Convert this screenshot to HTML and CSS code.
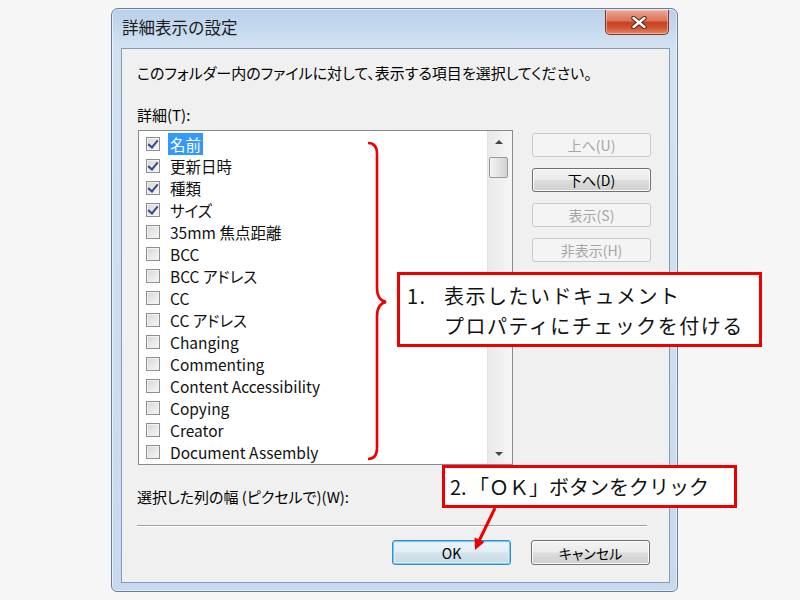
FILE: index.html
```html
<!DOCTYPE html>
<html lang="ja">
<head>
    <meta charset="UTF-8">
    <title>詳細表示の設定</title>
    <link rel="stylesheet" href="styles.css">
</head>
<body>
<div class="stage">

    <!-- Dialog -->
    <div class="window">
        <div class="titlebar">
            <span class="title">詳細表示の設定</span>
            <div class="close">
                <svg width="16" height="13" viewBox="0 0 16 13">
                    <path d="M2.5 2 L13.5 11 M13.5 2 L2.5 11" stroke="#5a2318" stroke-width="4.4" stroke-linecap="round"/>
                    <path d="M2.5 2 L13.5 11 M13.5 2 L2.5 11" stroke="#ffffff" stroke-width="2.4" stroke-linecap="round"/>
                </svg>
            </div>
        </div>
        <div class="client">
            <p class="intro">このフォルダー内のファイルに対して、表示する項目を選択してください。</p>
            <p class="label">詳細(T):</p>
            <div class="details">
                <div class="listbox">
                    <ul class="items">
                        <li class="checked selected"><span class="check"></span><span class="name">名前</span></li>
                        <li class="checked"><span class="check"></span><span class="name">更新日時</span></li>
                        <li class="checked"><span class="check"></span><span class="name">種類</span></li>
                        <li class="checked"><span class="check"></span><span class="name">サイズ</span></li>
                        <li><span class="check"></span><span class="name">35mm 焦点距離</span></li>
                        <li><span class="check"></span><span class="name">BCC</span></li>
                        <li><span class="check"></span><span class="name">BCC アドレス</span></li>
                        <li><span class="check"></span><span class="name">CC</span></li>
                        <li><span class="check"></span><span class="name">CC アドレス</span></li>
                        <li><span class="check"></span><span class="name">Changing</span></li>
                        <li><span class="check"></span><span class="name">Commenting</span></li>
                        <li><span class="check"></span><span class="name">Content Accessibility</span></li>
                        <li><span class="check"></span><span class="name">Copying</span></li>
                        <li><span class="check"></span><span class="name">Creator</span></li>
                        <li><span class="check"></span><span class="name">Document Assembly</span></li>
                    </ul>
                    <div class="scrollbar">
                        <span class="arrow up"></span>
                        <span class="thumb"></span>
                        <span class="track"></span>
                        <span class="arrow down"></span>
                    </div>
                </div>
                <div class="side">
                    <button class="btn" disabled>上へ(U)</button>
                    <button class="btn">下へ(D)</button>
                    <button class="btn" disabled>表示(S)</button>
                    <button class="btn" disabled>非表示(H)</button>
                </div>
            </div>
            <p class="width-label">選択した列の幅 (ピクセルで)(W):</p>
            <hr class="separator">
            <div class="footer">
                <button class="btn default">OK</button>
                <button class="btn">キャンセル</button>
            </div>
        </div>
    </div>

    <!-- Annotations -->
    <svg class="brace" width="32" height="328" viewBox="0 0 32 328">
        <path d="M8 5 Q17 5 17 16 L17 150 Q17 162 26 164 Q17 166 17 178 L17 310 Q17 321 8 321" fill="none" stroke="#ee0000" stroke-width="2.6"/>
    </svg>

    <div class="callout callout-one">
        <div><span class="num">1.</span>表示したいドキュメント</div>
        <div class="indent">プロパティにチェックを付ける</div>
    </div>

    <div class="callout callout-two">
        <span class="num">2.</span>「ＯＫ」ボタンをクリック
    </div>

    <svg class="pointer" width="40" height="50" viewBox="0 0 40 50">
        <path d="M33 2 L17 35" stroke="#ee0000" stroke-width="3"/>
        <polygon points="13,44 22.5,36 12.5,31.5" fill="#ee0000"/>
    </svg>

</div>
</body>
</html>
```

FILE: styles.css
```css
* {
    box-sizing: border-box;
    margin: 0;
    padding: 0;
}
body {
    width: 800px;
    height: 600px;
    overflow: hidden;
    background-color: #f6f6f6;
    font-family: "Noto Sans CJK JP", "Noto Sans", sans-serif;
    color: #000;
}
.stage {
    position: relative;
    width: 800px;
    height: 600px;
    padding: 8px 0 0 111px;
}

/* Window frame */
.window {
    width: 567px;
    height: 584px;
    border: 1px solid #6a7d92;
    border-radius: 7px 7px 6px 6px;
    background: linear-gradient(#b8d0ea, #d2e2f3 38px, #c6daef 100%);
    box-shadow: inset 0 0 0 1px rgba(255, 255, 255, 0.55);
    padding: 0 7px 8px 9px;
    display: flex;
    flex-direction: column;
}
.titlebar {
    height: 39px;
    display: flex;
    align-items: flex-start;
}
.title {
    font-size: 16.5px;
    line-height: 20px;
    margin-top: 8px;
    padding-left: 1px;
    color: #1c1c1c;
}
.close {
    margin: 1px 1px 0 auto;
    width: 64px;
    height: 25px;
    border: 1px solid #7b3627;
    border-top: none;
    border-radius: 0 0 5px 5px;
    background: linear-gradient(#eba897, #dc7257 45%, #c7411f 52%, #d15a37 78%, #e98a6c);
    box-shadow: inset 0 0 0 1px rgba(255, 220, 210, 0.5);
    display: flex;
    align-items: center;
    justify-content: center;
    padding-left: 3px;
}

/* Client area */
.client {
    flex: 1;
    background-color: #f0f0f0;
    border: 1px solid #8599af;
    padding-left: 15px;
    font-size: 15px;
    font-feature-settings: "palt";
}
.intro {
    margin-top: 16px;
    line-height: 16px;
    white-space: nowrap;
}
.label {
    margin-top: 26px;
    line-height: 16px;
}
.details {
    margin-top: 7px;
    height: 335px;
    display: flex;
}
.listbox {
    width: 375px;
    margin-left: 1px;
    border: 1px solid #858b94;
    background-color: #fff;
    display: flex;
}
.items {
    flex: 1;
    list-style: none;
    padding: 2px 0 0 7px;
    font-size: 15.5px;
    overflow: hidden;
}
.items li {
    height: 22px;
    display: flex;
    align-items: center;
}
.check {
    position: relative;
    width: 14px;
    height: 14px;
    flex: none;
    border: 1px solid #8e8f8f;
    background: linear-gradient(135deg, #d6d6d6, #f7f7f7);
    box-shadow: inset 0 0 0 1px #f2f2f2;
}
.checked .check::after {
    content: "";
    position: absolute;
    left: 3px;
    top: 0px;
    width: 4px;
    height: 8px;
    border: solid #34488c;
    border-width: 0 2px 2px 0;
    transform: rotate(40deg);
}
.name {
    margin-left: 8px;
    padding: 0 2px;
    line-height: 22px;
    white-space: nowrap;
    color: #111;
}
.selected .name {
    background-color: #3399ff;
    color: #fff;
}

/* Scrollbar */
.scrollbar {
    width: 25px;
    flex: none;
    background: linear-gradient(90deg, #e9e9e9, #f6f6f6);
    border-left: 1px solid #e2e2e2;
    display: flex;
    flex-direction: column;
    align-items: center;
    padding-right: 3px;
}
.arrow {
    height: 21px;
    width: 100%;
    display: flex;
    align-items: center;
    justify-content: center;
}
.arrow::before {
    content: "";
    border-left: 4px solid transparent;
    border-right: 4px solid transparent;
}
.arrow.up::before {
    border-bottom: 4px solid #444;
}
.arrow.down::before {
    border-top: 4px solid #444;
}
.thumb {
    width: 19px;
    height: 21px;
    margin-top: 5px;
    border: 1px solid #999;
    border-radius: 2px;
    background: linear-gradient(90deg, #f4f4f4, #e4e4e4 50%, #d2d2d2);
}
.track {
    flex: 1;
}

/* Buttons */
.side {
    margin-left: 19px;
    width: 119px;
    padding-top: 3px;
    display: flex;
    flex-direction: column;
    gap: 11px;
}
.btn {
    height: 24px;
    font-family: inherit;
    font-size: 14px;
    font-feature-settings: "palt";
    color: #000;
    border: 1px solid #707070;
    border-radius: 3px;
    background: linear-gradient(#f3f3f3, #ebebeb 48%, #dddddd 52%, #cfcfcf);
    box-shadow: inset 0 0 0 1px #fbfbfb;
}
.btn:disabled {
    border-color: #c9c9c9;
    background: #f4f4f4;
    color: #a6a6a6;
    box-shadow: none;
}
.width-label {
    margin-top: 24px;
    line-height: 16px;
}
.separator {
    margin-top: 20px;
    width: 510px;
    border: none;
    border-top: 1px solid #a0a0a0;
    border-bottom: 1px solid #fff;
}
.footer {
    margin-top: 13px;
    display: flex;
    justify-content: flex-end;
    gap: 20px;
    padding-right: 19px;
}
.footer .btn {
    width: 119px;
    height: 25px;
}
.btn.default {
    border-color: #3a8ccc;
    background: linear-gradient(#edf5fa, #e1edf4 48%, #d3e2ec 52%, #c6dae6);
    box-shadow: inset 0 0 0 1px #78c8f0, inset 0 0 0 2px #d8effb;
}

/* Red annotations */
.brace {
    position: absolute;
    left: 360px;
    top: 138px;
}
.callout {
    position: absolute;
    border: 3px solid #ee0000;
    background-color: #fff;
    font-size: 20px;
    color: #111;
    white-space: nowrap;
}
.callout .num {
    display: inline-block;
}
.callout-one {
    left: 397px;
    top: 272px;
    width: 365px;
    height: 75px;
    padding: 6px 0 0 3px;
    line-height: 30px;
    letter-spacing: 1.5px;
}
.callout-one .num {
    width: 41px;
    padding-left: 4px;
}
.callout-one .indent {
    padding-left: 41px;
}
.callout-two {
    left: 442px;
    top: 465px;
    width: 295px;
    height: 43px;
    padding-left: 3px;
    line-height: 37px;
}
.callout-two .num {
    width: 21px;
    padding-left: 2px;
}
.pointer {
    position: absolute;
    left: 462px;
    top: 506px;
}
```
